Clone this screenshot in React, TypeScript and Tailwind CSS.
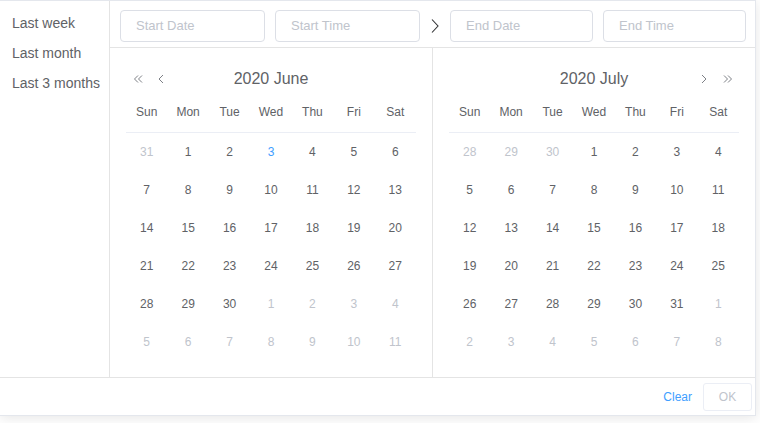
import React from 'react'

type Day = { n: number; muted?: boolean; today?: boolean }

const weekdays = ['Sun', 'Mon', 'Tue', 'Wed', 'Thu', 'Fri', 'Sat']

function buildMonth(prevTail: number[], count: number, nextCount: number, today?: number): Day[] {
  const days: Day[] = []
  prevTail.forEach((n) => days.push({ n, muted: true }))
  for (let i = 1; i <= count; i++) days.push({ n: i, today: i === today })
  for (let i = 1; i <= nextCount; i++) days.push({ n: i, muted: true })
  return days
}

const june = buildMonth([31], 30, 11, 3)
const july = buildMonth([28, 29, 30], 31, 8)

function Chevron({ double, dir }: { double?: boolean; dir: 'left' | 'right' }) {
  const flip = dir === 'left' ? 'scale(-1,1) translate(-12,0)' : undefined
  return (
    <svg width="12" height="12" viewBox="0 0 12 12" className="block">
      <g transform={flip} fill="none" stroke="#7d8086" strokeWidth="1">
        {double ? (
          <>
            <path d="M2 2.5 L5.5 6 L2 9.5" />
            <path d="M6 2.5 L9.5 6 L6 9.5" />
          </>
        ) : (
          <path d="M4 2 L8 6 L4 10" />
        )}
      </g>
    </svg>
  )
}

function MonthTable({ days }: { days: Day[] }) {
  return (
    <div>
      <div className="grid grid-cols-7 h-[41px] border-b border-[#ebeef5] text-[12px] text-[#606266]">
        {weekdays.map((w) => (
          <div key={w} className="flex items-center justify-center">
            {w}
          </div>
        ))}
      </div>
      <div className="grid grid-cols-7 text-[12px]">
        {days.map((d, i) => (
          <div
            key={i}
            className={
              'h-[38px] flex items-center justify-center ' +
              (d.muted ? 'text-[#c0c4cc]' : d.today ? 'text-[#409eff]' : 'text-[#606266]')
            }
          >
            {d.n}
          </div>
        ))}
      </div>
    </div>
  )
}

function Input({ placeholder, width }: { placeholder: string; width: string }) {
  return (
    <div
      className={
        'h-[32px] border border-[#dcdfe6] rounded-[4px] pl-[15px] flex items-center text-[13px] text-[#c0c4cc] ' +
        width
      }
    >
      {placeholder}
    </div>
  )
}

export default function App() {
  return (
    <div className="w-[760px] h-[423px] bg-white overflow-hidden font-['Liberation_Sans',Arial,sans-serif]">
      <div className="w-[756px] bg-white border-t border-r border-b border-[#e4e7ed] shadow-[0_2px_12px_0_rgba(0,0,0,0.1)] flex flex-col">
        <div className="flex">
          {/* Sidebar */}
          <div className="w-[110px] border-r border-[#e4e4e4] pt-[7px]">
            {['Last week', 'Last month', 'Last 3 months'].map((s) => (
              <div key={s} className="h-[30px] leading-[30px] pl-[12px] text-[14px] text-[#606266]">
                {s}
              </div>
            ))}
          </div>

          {/* Main */}
          <div className="flex-1 flex flex-col">
            <div className="h-[47px] border-b border-[#e4e4e4] flex items-start pt-[9px] pl-[10px]">
              <Input placeholder="Start Date" width="w-[145px]" />
              <div className="w-[10px]" />
              <Input placeholder="Start Time" width="w-[145px]" />
              <div className="w-[30px] h-[32px] flex items-center justify-center">
                <svg width="8" height="16" viewBox="0 0 8 16">
                  <path d="M1 1.5 L7 8 L1 14.5" fill="none" stroke="#303133" strokeWidth="1.1" />
                </svg>
              </div>
              <Input placeholder="End Date" width="w-[143px]" />
              <div className="w-[10px]" />
              <Input placeholder="End Time" width="w-[143px]" />
            </div>

            <div className="flex">
              {/* Left month */}
              <div className="w-[323px] border-r border-[#e4e4e4] p-[16px]">
                <div className="h-[28px] grid grid-cols-[1fr_auto_1fr] items-center">
                  <div className="flex items-center gap-[11px] pl-[6px] pt-[1px]">
                    <Chevron double dir="left" />
                    <Chevron dir="left" />
                  </div>
                  <div className="text-[16px] text-[#606266] pt-[2px]">2020 June</div>
                  <div />
                </div>
                <MonthTable days={june} />
              </div>

              {/* Right month */}
              <div className="w-[322px] p-[16px]">
                <div className="h-[28px] grid grid-cols-[1fr_auto_1fr] items-center">
                  <div />
                  <div className="text-[16px] text-[#606266] pt-[2px]">2020 July</div>
                  <div className="flex items-center justify-end gap-[12px] pr-[5px] pt-[1px]">
                    <Chevron dir="right" />
                    <Chevron double dir="right" />
                  </div>
                </div>
                <MonthTable days={july} />
              </div>
            </div>
          </div>
        </div>

        {/* Footer */}
        <div className="border-t border-[#e4e4e4] h-[38px] flex items-center justify-end pr-[3px]">
          <span className="text-[12px] text-[#409eff] mr-[11px]">Clear</span>
          <button className="w-[49px] h-[28px] border border-[#ebeef5] rounded-[3px] bg-white text-[12px] text-[#c0c4cc]">
            OK
          </button>
        </div>
      </div>
    </div>
  )
}
